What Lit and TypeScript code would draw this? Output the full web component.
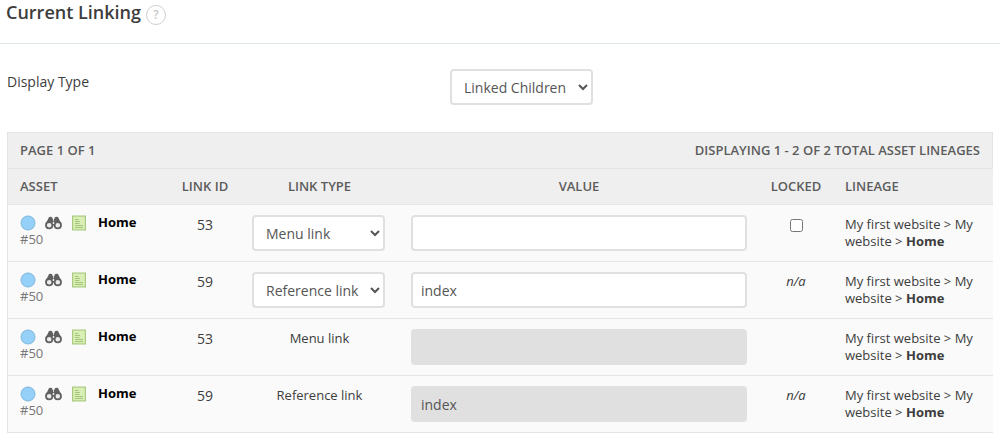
import { LitElement, html, css, nothing } from "lit";
import { customElement } from "lit/decorators.js";

interface LinkRow {
  id: number;
  type: string;
  value: string;
  editable: boolean;
  locked: "checkbox" | "na" | "";
}

const LINK_TYPES = ["Menu link", "Reference link"];

const ROWS: LinkRow[] = [
  { id: 53, type: "Menu link", value: "", editable: true, locked: "checkbox" },
  { id: 59, type: "Reference link", value: "index", editable: true, locked: "na" },
  { id: 53, type: "Menu link", value: "", editable: false, locked: "" },
  { id: 59, type: "Reference link", value: "index", editable: false, locked: "na" },
];

const statusIcon = html`<svg class="status" viewBox="0 0 16 16" aria-hidden="true">
  <circle cx="8" cy="8" r="7" fill="#94d0f8" stroke="#7db5dc" />
</svg>`;

const binocularsIcon = html`<svg class="binoculars" viewBox="0 0 17 14" aria-hidden="true">
  <path
    fill="#606060"
    d="M3.700 1.800C4 .5 6.600.3 7.300 1.600L7.600 3h1.800l.3-1.400c.7-1.300 3.300-1.100 3.700.2l2.500 5.300H1.100z"
  />
  <path fill="#606060" d="M7 5h3v4.500H7z" />
  <circle cx="4.200" cy="9.200" r="3.200" fill="#ececec" stroke="#606060" stroke-width="1.800" />
  <circle cx="12.800" cy="9.200" r="3.200" fill="#ececec" stroke="#606060" stroke-width="1.800" />
  <path d="M8.500 1v4.200" stroke="#fafafa" stroke-width=".8" />
  <circle cx="8.500" cy="7" r=".9" fill="#fafafa" />
</svg>`;

const pageIcon = html`<svg class="page" viewBox="0 0 14 16" aria-hidden="true">
  <rect x=".6" y="1.100" width="12.800" height="13.800" fill="#d9efb5" stroke="#aaca80" stroke-width="1.200" />
  <path d="M3 4.500h3.500M3 6.500h5M3 8.500h4.500M3 10.500h8M3 12.500h8" stroke="#a4c47c" />
</svg>`;

@customElement("app-root")
export class AppRoot extends LitElement {
  static styles = css`
    :host {
      display: block;
      font: 14px/17px "Open Sans", "Noto Sans", sans-serif;
      color: #3d3d3d;
      background: #fff;
    }
    * {
      box-sizing: border-box;
    }
    .heading {
      display: flex;
      align-items: flex-start;
      gap: 5px;
      height: 44px;
      padding: 0 6px;
      border-bottom: 1px solid #e0e7ea;
    }
    h2 {
      margin: 0;
      font-size: 18px;
      line-height: 24px;
      font-weight: 600;
    }
    .help {
      width: 20px;
      height: 20px;
      margin-top: 5px;
      padding: 0;
      border: 1px solid #d0d0d0;
      border-radius: 50%;
      background: none;
      color: #c8c8c8;
      font: 600 12px/18px "Open Sans", sans-serif;
    }
    .field {
      display: grid;
      grid-template-columns: 45% 1fr;
      align-items: start;
      padding: 25px 0 27px;
    }
    .field label {
      padding: 4px 0 0 7px;
    }
    select,
    .text {
      height: 36px;
      border: 2px solid #e0e0e0;
      border-radius: 4px;
      background: #fff;
      color: #555;
      font: 14px/20px "Open Sans", "Noto Sans", sans-serif;
      vertical-align: top;
    }
    select {
      width: 133px;
      padding: 0 0 0 8px;
    }
    .display {
      width: 143px;
    }
    .text {
      display: block;
      width: 100%;
      padding: 0 8px;
    }
    .text:disabled {
      background: #e0e0e0;
    }
    .listing {
      margin: 0 7px;
    }
    .summary {
      display: flex;
      justify-content: space-between;
      padding: 9px 12px;
      border: 1px solid #e4e4e4;
      background: #efefef;
      color: #5c5c5c;
      font-size: 13px;
      font-weight: 600;
    }
    table {
      width: 100%;
      table-layout: fixed;
      border-collapse: separate;
      border-spacing: 0;
      border-left: 1px solid #e4e4e4;
    }
    .c-asset {
      width: 162px;
    }
    .c-id {
      width: 70px;
    }
    .c-type {
      width: 159px;
    }
    .c-locked {
      width: 74px;
    }
    .c-lineage {
      width: 160px;
    }
    th {
      padding: 9px 12px;
      border-bottom: 1px solid #e4e4e4;
      background: #efefef;
      color: #5c5c5c;
      font-size: 13px;
      font-weight: 600;
      white-space: nowrap;
    }
    th.tight {
      padding: 9px 0;
    }
    td {
      padding: 11px 12px 9px;
      border-bottom: 1px solid #e4e4e4;
      background: #fafafa;
      font-size: 13px;
      text-align: center;
      vertical-align: top;
    }
    td.control {
      padding: 10px 12px;
      text-align: left;
    }
    td.asset-cell {
      padding-top: 9px;
    }
    th.start,
    td.start {
      text-align: left;
    }
    .number {
      font-size: 14px;
    }
    .asset {
      display: flex;
      align-items: center;
      height: 17px;
      color: #000;
      font-weight: 700;
    }
    .status {
      width: 16px;
      height: 16px;
      margin-right: 9px;
    }
    .binoculars {
      width: 17px;
      height: 14px;
      margin-right: 10px;
    }
    .page {
      width: 14px;
      height: 16px;
      margin-right: 12px;
    }
    .asset-id {
      color: #777;
    }
    .check {
      display: block;
      width: 13px;
      height: 13px;
      margin: 3px auto 0;
    }
    td.lineage {
      padding-right: 8px;
    }
    .lineage b {
      font-weight: 700;
    }
  `;

  private row(row: LinkRow) {
    return html`<tr>
      <td class="start asset-cell">
        <div class="asset">${statusIcon}${binocularsIcon}${pageIcon}<span>Home</span></div>
        <div class="asset-id">#50</div>
      </td>
      <td class="number">${row.id}</td>
      ${row.editable
        ? html`<td class="control">
            <select aria-label="Link type">
              ${LINK_TYPES.map((t) => html`<option ?selected=${t === row.type}>${t}</option>`)}
            </select>
          </td>`
        : html`<td>${row.type}</td>`}
      <td class="control">
        <input class="text" type="text" aria-label="Value" .value=${row.value} ?disabled=${!row.editable} />
      </td>
      <td>
        ${row.locked === "checkbox"
          ? html`<input class="check" type="checkbox" aria-label="Locked" />`
          : row.locked === "na"
            ? html`<em>n/a</em>`
            : nothing}
      </td>
      <td class="start lineage">My first website &gt; My website &gt; <b>Home</b></td>
    </tr>`;
  }

  render() {
    return html`
      <header class="heading">
        <h2>Current Linking</h2>
        <button class="help" type="button">?</button>
      </header>
      <div class="field">
        <label for="display-type">Display Type</label>
        <select id="display-type" class="display">
          <option>Linked Children</option>
        </select>
      </div>
      <section class="listing">
        <div class="summary">
          <span>PAGE 1 OF 1</span>
          <span>DISPLAYING 1 - 2 OF 2 TOTAL ASSET LINEAGES</span>
        </div>
        <table>
          <colgroup>
            <col class="c-asset" />
            <col class="c-id" />
            <col class="c-type" />
            <col />
            <col class="c-locked" />
            <col class="c-lineage" />
          </colgroup>
          <thead>
            <tr>
              <th class="start">ASSET</th>
              <th class="tight">LINK ID</th>
              <th>LINK TYPE</th>
              <th>VALUE</th>
              <th class="tight">LOCKED</th>
              <th class="start">LINEAGE</th>
            </tr>
          </thead>
          <tbody>
            ${ROWS.map((r) => this.row(r))}
          </tbody>
        </table>
      </section>
    `;
  }
}
